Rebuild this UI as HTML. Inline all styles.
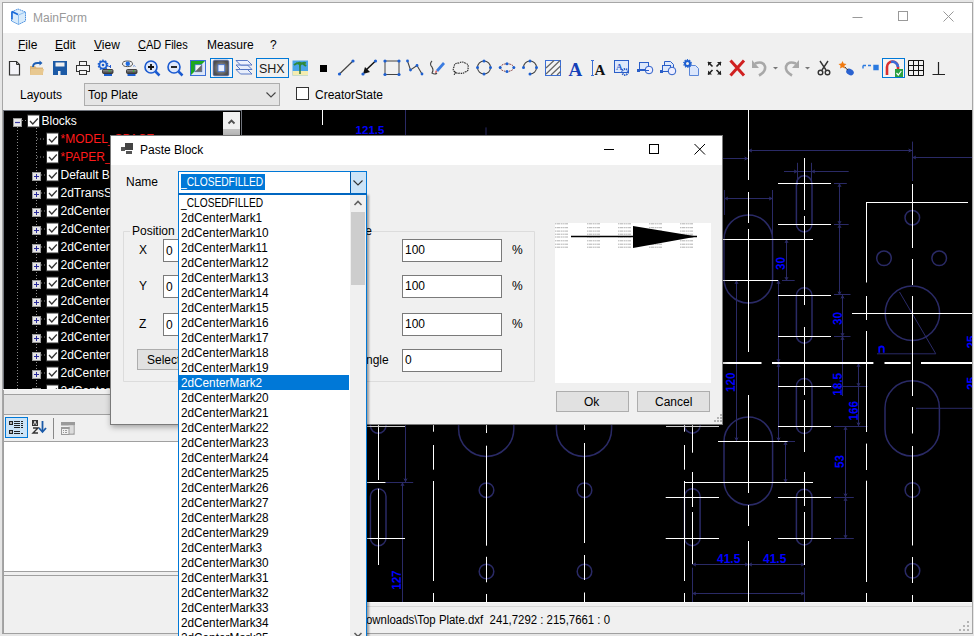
<!DOCTYPE html>
<html><head><meta charset="utf-8">
<style>
*{margin:0;padding:0;box-sizing:border-box}
html,body{width:974px;height:636px;overflow:hidden;background:#e6e6e6;font-family:"Liberation Sans",sans-serif;font-size:12px;color:#000}
.a{position:absolute}
.t{position:absolute;white-space:nowrap;line-height:1}
#win{left:2px;top:2px;width:971px;height:632px;border:1px solid #a6a6a6;background:#f0f0f0}
</style></head><body>
<div id="win" class="a"></div>
<!-- title bar -->
<div class="a" style="left:3px;top:3px;width:969px;height:30px;background:#fff"></div>
<svg class="a" style="left:0;top:0" width="974" height="34">
<path d="M11.5 12l6.5-3l7.5 3v9l-7 3.5l-7-3.5z" fill="#d8ebfb" stroke="#4a90e0" stroke-width="1" stroke-dasharray="1.6 0.6"/>
<path d="M11.5 12l7 3l7-3M18.5 15v9.5" fill="none" stroke="#7ab4ee" stroke-width="0.8"/>
<path d="M12 11.5v8" stroke="#1a6ad8" stroke-width="1.6"/>
<path d="M12 11.5l6 3" stroke="#1a6ad8" stroke-width="1.4"/>
<path d="M852.5 17.5h10" stroke="#999" stroke-width="1"/>
<rect x="898.5" y="11.5" width="9" height="9" fill="none" stroke="#999" stroke-width="1"/>
<path d="M943.5 11.5l10 10M953.5 11.5l-10 10" stroke="#999" stroke-width="1"/>
</svg>
<div class="t" style="left:33px;top:12px;color:#999">MainForm</div>
<!-- menu -->
<div class="t" style="left:18px;top:39px"><u>F</u>ile</div>
<div class="t" style="left:55px;top:39px"><u>E</u>dit</div>
<div class="t" style="left:94px;top:39px"><u>V</u>iew</div>
<div class="t" style="left:138px;top:39px;transform-origin:0 0;transform:scaleX(0.92)"><u>C</u>AD Files</div>
<div class="t" style="left:207px;top:39px">Measure</div>
<div class="t" style="left:270px;top:39px">?</div>
<!-- layouts bar -->
<div class="t" style="left:20px;top:89px">Layouts</div>
<div class="a" style="left:84px;top:83px;width:196px;height:23px;background:#e5e5e5;border:1px solid #adadad"></div>
<div class="t" style="left:88px;top:89px">Top Plate</div>
<svg class="a" style="left:262px;top:88px" width="16" height="12"><path d="M4.5 4.5l4.5 4.5l4.5-4.5" fill="none" stroke="#444" stroke-width="1.1"/></svg>
<div class="a" style="left:296px;top:87px;width:13px;height:13px;background:#fff;border:1px solid #333"></div>
<div class="t" style="left:315px;top:89px">CreatorState</div>
<!-- left panel -->
<div class="a" style="left:3px;top:110px;width:238px;height:279px;background:#000"></div>
<div class="a" style="left:3px;top:394px;width:238px;height:1px;background:#a0a0a0"></div>
<div class="a" style="left:3px;top:395px;width:238px;height:19px;background:#e1e1e1"></div>
<div class="a" style="left:3px;top:441px;width:238px;height:1px;background:#a0a0a0"></div>
<div class="a" style="left:3px;top:442px;width:238px;height:129px;background:#fff"></div>
<div class="a" style="left:3px;top:571px;width:238px;height:1px;background:#a0a0a0"></div>
<div class="a" style="left:3px;top:575px;width:238px;height:1px;background:#a0a0a0"></div>
<!-- cad view -->
<div class="a" style="left:242px;top:110px;width:730px;height:492px;background:#000"></div>
<!-- status -->
<div class="a" style="left:242px;top:606px;width:730px;height:1px;background:#d8d8d8"></div>
<div class="t" style="left:366px;top:614px;transform-origin:0 0;transform:scaleX(0.95)">ownloads\Top Plate.dxf&nbsp; 241,7292 : 215,7661 : 0</div>
<svg class="a" style="left:955px;top:617px" width="17" height="16" viewBox="955 617 17 16">
<rect x="967" y="621" width="2" height="2" fill="#b4b4b4"/><rect x="963" y="625" width="2" height="2" fill="#b4b4b4"/><rect x="967" y="625" width="2" height="2" fill="#b4b4b4"/><rect x="959" y="629" width="2" height="2" fill="#b4b4b4"/><rect x="963" y="629" width="2" height="2" fill="#b4b4b4"/><rect x="967" y="629" width="2" height="2" fill="#b4b4b4"/>
</svg>
<div class="a" style="left:3px;top:389px;width:1px;height:245px;background:#a0a0a0"></div>
<div class="a" style="left:2px;top:633px;width:971px;height:1px;background:#a0a0a0"></div>
<div class="a" style="left:242px;top:602px;width:730px;height:1px;background:#fafafa"></div>
<svg class="a" style="left:0;top:55px" width="974" height="25" viewBox="0 55 974 25">
<!-- 1 new doc -->
<path d="M9.5 61.5h7l3 3v10.5h-10z" fill="#f4f4f8" stroke="#333" stroke-width="1.2"/>
<path d="M16.5 61.5v3h3" fill="none" stroke="#333" stroke-width="1"/>
<!-- 2 open folder -->
<path d="M30 66h5l1.5 1.5H43v7.5H30z" fill="#dcb67a"/>
<path d="M31 69h13l-1.5 6H30z" fill="#e8c890"/>
<path d="M33 67q0-4 4.5-4h3" fill="none" stroke="#1e5fb4" stroke-width="1.8"/>
<path d="M39.5 60.5l3 2.5l-3 2.5z" fill="#1e5fb4"/>
<!-- 3 save -->
<path d="M53 61h14v14H53z" fill="#1c5aa6"/>
<rect x="55.5" y="62.5" width="9" height="4" fill="#f0f0f0"/>
<rect x="58" y="71" width="2.5" height="4" fill="#f0f0f0"/>
<!-- 4 printer -->
<rect x="79.5" y="61.5" width="7" height="4" fill="#f4f4f4" stroke="#333"/>
<rect x="76.5" y="65.5" width="13" height="6" fill="#f4f4f4" stroke="#333"/>
<rect x="79.5" y="70.5" width="7" height="4" fill="#f4f4f4" stroke="#333"/>
<!-- 5 gear printer -->
<circle cx="103" cy="65" r="3.6" fill="none" stroke="#1d5fd0" stroke-width="1.8"/>
<circle cx="103" cy="65" r="4.6" fill="none" stroke="#1d5fd0" stroke-width="1.6" stroke-dasharray="1.5 1.4"/>
<circle cx="103" cy="65" r="1.3" fill="#1d5fd0"/>
<path d="M108.5 66.5h2.5M110.5 65v3" stroke="#2a5ed0" stroke-width="1"/>
<defs><linearGradient id="pg" x1="0" y1="0" x2="0" y2="1"><stop offset="0" stop-color="#9a9a9a"/><stop offset="1" stop-color="#3a3a3a"/></linearGradient></defs>
<rect x="102.5" y="69.5" width="10.5" height="4" rx="1" fill="url(#pg)" stroke="#222" stroke-width="0.8"/>
<rect x="108.5" y="70.3" width="2" height="1.2" fill="#30c030"/>
<rect x="104" y="74" width="8" height="2" fill="#1d5fd0"/>
<!-- 6 eye printer -->
<ellipse cx="127.5" cy="63.8" rx="5" ry="2.8" fill="#f2f2f2" stroke="#444" stroke-width="0.9"/>
<circle cx="127.8" cy="63.8" r="2.2" fill="#1d6ae0"/>
<path d="M133 66.5q1-2 2.5 0" stroke="#5a8ae0" fill="none" stroke-width="0.9"/>
<rect x="126.5" y="69.5" width="10.5" height="4" rx="1" fill="url(#pg)" stroke="#222" stroke-width="0.8"/>
<rect x="133" y="70.3" width="1.2" height="1.5" fill="#30c030"/>
<rect x="127.5" y="74" width="8" height="2" fill="#1d5fd0"/>
<!-- 7 zoom in -->
<circle cx="151" cy="67" r="6" fill="#dfe8fb" stroke="#1a5ad0" stroke-width="1.6"/>
<path d="M155.5 71.5l4 4" stroke="#1a5ad0" stroke-width="2.5"/>
<path d="M148 67h6M151 64v6" stroke="#111" stroke-width="1.8"/>
<!-- 8 zoom out -->
<circle cx="174" cy="67" r="6" fill="#dfe8fb" stroke="#1a5ad0" stroke-width="1.6"/>
<path d="M178.5 71.5l4 4" stroke="#1a5ad0" stroke-width="2.5"/>
<path d="M171 67h6" stroke="#111" stroke-width="1.8"/>
<!-- 9 green square -->
<rect x="190.5" y="60.5" width="15" height="15" fill="#dfe7f8" stroke="#3b6fd6"/>
<path d="M191 61h14L191 75z" fill="#1ea81e"/>
<rect x="195" y="64.7" width="6.8" height="7" fill="#f4f4f4" stroke="#3b6fd6" stroke-width="0.8"/>
<path d="M201.8 64.7v7h-6.8z" fill="#6a6a6a"/>
<!-- 10 selected -->
<rect x="210.5" y="58.5" width="22" height="19" fill="#f4f4f4" stroke="#0078d7"/>
<defs><radialGradient id="rg1"><stop offset="0" stop-color="#a8a8a8"/><stop offset="1" stop-color="#4e4e4e"/></radialGradient></defs>
<rect x="213.2" y="60.2" width="15.6" height="15.6" rx="1.5" fill="url(#rg1)" stroke="#3a5ab0" stroke-width="0.6"/>
<rect x="218" y="64.7" width="6.7" height="7" fill="#e8efff" stroke="#3b6fd6" stroke-width="0.8"/>
<!-- 11 layers -->
<path d="M236 69.5h11.5l4.5 4.5h-11.5z" fill="#e8eefb" stroke="#4a6cc0" stroke-width="0.9"/>
<path d="M236 65h11.5l4.5 4.5h-11.5z" fill="#e8eefb" stroke="#4a6cc0" stroke-width="0.9"/>
<path d="M236 60.5h11.5l4.5 4.5h-11.5z" fill="#eef2fd" stroke="#4a6cc0" stroke-width="0.9"/>
<!-- 12 SHX -->
<rect x="256.5" y="58.5" width="32" height="19" fill="#f0f0f0" stroke="#0078d7"/>
<text x="259" y="73" font-family="Liberation Sans" font-size="12.5" fill="#1a1a1a">SHX</text>
<!-- 13 palm -->
<rect x="292.5" y="60.5" width="15.5" height="15" fill="#48a4e8"/>
<rect x="292.5" y="71" width="15.5" height="4.5" fill="#f4ecb0"/>
<path d="M300 64v10" stroke="#2f7a3a" stroke-width="1.5"/>
<path d="M294 65q6-5 12 1M296 63q4 1 4 2q2-3 6-2" fill="none" stroke="#2f8a3a" stroke-width="1.8"/>
<!-- 14 black square -->
<rect x="320" y="65" width="7" height="7" fill="#000"/>
<!-- 15 line -->
<path d="M339.5 74l13.5-13" stroke="#444" stroke-width="1.2"/>
<circle cx="339.5" cy="74" r="1.6" fill="#1d5fd0"/><circle cx="353" cy="61" r="1.6" fill="#1d5fd0"/>
<!-- 16 arrow -->
<path d="M375.5 61L365 71" stroke="#111" stroke-width="1.5"/>
<path d="M363 74l2-7l5 5z" fill="#111"/>
<circle cx="375.5" cy="61" r="1.6" fill="#1d5fd0"/><circle cx="363" cy="74" r="1.6" fill="#1d5fd0"/>
<!-- 17 rect -->
<rect x="385" y="61" width="14" height="13.5" fill="none" stroke="#444"/>
<circle cx="385" cy="61" r="1.6" fill="#1d5fd0"/><circle cx="399" cy="61" r="1.6" fill="#1d5fd0"/>
<circle cx="385" cy="74.5" r="1.6" fill="#1d5fd0"/><circle cx="399" cy="74.5" r="1.6" fill="#1d5fd0"/>
<!-- 18 polyline -->
<path d="M407.5 61l3 9l6.5-4.5l5 8.5" fill="none" stroke="#444" stroke-width="1.1"/>
<circle cx="407.5" cy="61" r="1.4" fill="#1d5fd0"/><circle cx="410.5" cy="70" r="1.4" fill="#1d5fd0"/><circle cx="417" cy="65.5" r="1.4" fill="#1d5fd0"/><circle cx="422" cy="74" r="1.4" fill="#1d5fd0"/>
<!-- 19 pen -->
<path d="M432 61q-3 3 0 6q2 3 0 6q3 2 5 0" fill="none" stroke="#444" stroke-width="1.1"/>
<path d="M438 72l7-8l-2-2l-7 8z" fill="#3a7be0"/>
<path d="M436 70l-1 3l2-1z" fill="#d33"/>
<!-- 20 cloud -->
<path d="M455 72q-3-2-1-5q0-4 5-4q3-2 6 0q4 1 3 5q1 3-3 4q-2 2-5 1q-3 1-5-1z" fill="none" stroke="#222" stroke-width="1.1" stroke-dasharray="1.5 0.8"/>
<path d="M456 72l-2 3" stroke="#222"/>
<!-- 21 circle -->
<circle cx="484" cy="67.5" r="6.5" fill="none" stroke="#444" stroke-width="1.1"/>
<circle cx="484" cy="61" r="1.5" fill="#1d5fd0"/><circle cx="484" cy="74" r="1.5" fill="#1d5fd0"/><circle cx="477.5" cy="67.5" r="1.5" fill="#1d5fd0"/><circle cx="490.5" cy="67.5" r="1.5" fill="#1d5fd0"/>
<!-- 22 ellipse -->
<ellipse cx="507" cy="67.6" rx="6.8" ry="3.8" fill="none" stroke="#7a2a2a" stroke-width="1" stroke-dasharray="1.5 1"/>
<circle cx="507" cy="63.8" r="1.5" fill="#1d5fd0"/><circle cx="507" cy="71.4" r="1.5" fill="#1d5fd0"/><circle cx="500.2" cy="67.6" r="1.5" fill="#1d5fd0"/><circle cx="513.8" cy="67.6" r="1.5" fill="#1d5fd0"/>
<!-- 23 arc -->
<path d="M523.5 67.5A6.5 6.5 0 1 1 530 74" fill="none" stroke="#444" stroke-width="1.1"/>
<circle cx="523.5" cy="67.5" r="1.5" fill="#1d5fd0"/><circle cx="530" cy="61" r="1.5" fill="#1d5fd0"/><circle cx="536.5" cy="67.5" r="1.5" fill="#1d5fd0"/><circle cx="530" cy="74" r="1.5" fill="#1d5fd0"/>
<!-- 24 hatch -->
<rect x="545.5" y="60.5" width="15" height="15" fill="#f4f4f4" stroke="#3b6fd6"/>
<path d="M546 68l8-7.5M546 74l14-13.5M551 75l9.5-9M557 75l3.5-3.5" stroke="#666" stroke-width="1.2"/>
<!-- 25 A -->
<text x="568.5" y="75.5" font-family="Liberation Serif" font-weight="bold" font-size="19" fill="#1640b8">A</text>
<!-- 26 [A -->
<path d="M591 60.5h3M592.5 60.5v15M591 75.5h3" stroke="#3b6fd6" stroke-width="1"/>
<text x="594.5" y="74.5" font-family="Liberation Serif" font-weight="bold" font-size="15" fill="#111">A</text>
<!-- 27 A gear -->
<rect x="614.5" y="60.5" width="14" height="12" fill="#dde8fb" stroke="#2a5ec8"/>
<text x="616" y="70" font-family="Liberation Serif" font-weight="bold" font-size="9" fill="#2a5ec8">A</text>
<circle cx="625" cy="72" r="3" fill="none" stroke="#2a5ec8" stroke-width="2" stroke-dasharray="1.3 0.8"/>
<!-- 28 block insert -->
<rect x="639.5" y="62.5" width="9" height="7" fill="#dde8fb" stroke="#2a5ec8"/>
<circle cx="649" cy="70" r="3.8" fill="#eef" stroke="#2a5ec8"/>
<rect x="637" y="69" width="3" height="3" fill="#2a5ec8"/>
<path d="M640 70.5h9" stroke="#2a5ec8"/>
<!-- 29 block 2 -->
<path d="M664.5 61.5h6l3 3v6h-9z" fill="#dde8fb" stroke="#2a5ec8"/>
<rect x="662.5" y="65.5" width="8" height="6" fill="#dde8fb" stroke="#2a5ec8"/>
<circle cx="672" cy="71" r="3.8" fill="#eef" stroke="#2a5ec8"/>
<rect x="660" y="70" width="3" height="3" fill="#2a5ec8"/>
<!-- 30 gear doc -->
<path d="M689.5 65.5h6l3 3v7h-9z" fill="#dbe6fb" stroke="#5a86d8"/>
<circle cx="687.5" cy="63.5" r="2.5" fill="none" stroke="#1d5fd0" stroke-width="2"/>
<circle cx="687.5" cy="63.5" r="3.8" fill="none" stroke="#1d5fd0" stroke-width="1.2" stroke-dasharray="1.2 1.2"/>
<!-- 31 expand -->
<path d="M708 62l4.5 4.5M721 62l-4.5 4.5M708 74.5l4.5-4.5M721 74.5l-4.5-4.5" stroke="#222" stroke-width="1.6"/>
<path d="M708 62h4l-4 4zM721 62h-4l4 4zM708 74.5h4l-4-4zM721 74.5h-4l4-4z" fill="#222"/>
<!-- 32 red X -->
<path d="M730.5 60.5l13.5 15M744 60.5l-13.5 15" stroke="#d02020" stroke-width="3"/>
<!-- 33 undo -->
<path d="M755 63.5q8-3 10 3q1 5-6 9" fill="none" stroke="#a8a8a8" stroke-width="2.6"/>
<path d="M752 60v8h7z" fill="#a8a8a8"/>
<path d="M773 67h5l-2.5 2.5z" fill="#777"/>
<!-- 34 redo -->
<path d="M796 63.5q-8-3-10 3q-1 5 6 9" fill="none" stroke="#a8a8a8" stroke-width="2.6"/>
<path d="M799 60v8h-7z" fill="#a8a8a8"/>
<path d="M805 67h5l-2.5 2.5z" fill="#777"/>
<!-- 35 scissors -->
<path d="M820 61l6 9M828 61l-6 9" stroke="#333" stroke-width="1.4"/>
<circle cx="820.5" cy="72.5" r="2.3" fill="none" stroke="#333" stroke-width="1.4"/>
<circle cx="827.5" cy="72.5" r="2.3" fill="none" stroke="#333" stroke-width="1.4"/>
<!-- 36 star mouse -->
<path d="M842.5 61l1.2 2.6l2.8.3l-2.1 1.9l.6 2.8l-2.5-1.4l-2.5 1.4l.6-2.8l-2.1-1.9l2.8-.3z" fill="#f07a10"/>
<ellipse cx="850" cy="72" rx="4" ry="3" fill="#2a62d0" transform="rotate(30 850 72)"/>
<path d="M845 67q1 2 3 3" stroke="#333" fill="none"/>
<!-- 37 dimension -->
<path d="M863 65.5h3M863 65.5v3M868 65.5h3M874 65.5h4v4h-4z" stroke="#2a7ae0" stroke-width="1.4" fill="#2a7ae0"/>
<!-- 38 magnet -->
<rect x="882.5" y="58.5" width="22" height="19" fill="#f4f4f4" stroke="#0078d7"/>
<path d="M887 75v-8a5.5 5.5 0 0 1 11 0v3" fill="none" stroke="#d93030" stroke-width="2.6"/>
<path d="M891 62a5.5 5.5 0 0 1 7 5" fill="none" stroke="#3a6ad8" stroke-width="2.6"/>
<rect x="895" y="69" width="8" height="8" fill="#2aa040"/>
<path d="M896.5 73l1.8 2l3-4" stroke="#fff" stroke-width="1.2" fill="none"/>
<!-- 39 grid -->
<path d="M908.5 60.5h15v15h-15zM913.5 60v16M918.5 60v16M908 65.5h16M908 70.5h16" fill="none" stroke="#111" stroke-width="1"/>
<!-- 40 perp -->
<path d="M938.5 62v12.5M932.5 74.5h12.5" stroke="#222" stroke-width="1.2"/>
</svg>
<!-- tree -->
<svg class="a" style="left:3px;top:110px" width="238" height="279" viewBox="3 110 238 279">
<path d="M17.5 127v262M36.5 128v261" stroke="#8a8a8a" stroke-width="1" stroke-dasharray="1 2"/>
<path d="M22 120.5h5" stroke="#8a8a8a" stroke-width="1" stroke-dasharray="1 2"/>
<rect x="13.5" y="118.5" width="8" height="8" fill="#e8e8e8" stroke="#9a9a9a"/><path d="M15 122.5h5" stroke="#3a3aa0" stroke-width="1.2"/>
<rect x="27.5" y="115.0" width="12" height="12" fill="#fff" stroke="#333"/><path d="M30 121.0l2.8 3l5-5.5" fill="none" stroke="#333" stroke-width="1.3"/>
<text x="41.5" y="124.7" font-family="Liberation Sans" font-size="12" fill="#fff">Blocks</text>
<path d="M37 139.0h9" stroke="#8a8a8a" stroke-width="1" stroke-dasharray="1 2"/>
<rect x="46.5" y="133.0" width="12" height="12" fill="#fff" stroke="#333"/><path d="M49 139.0l2.8 3l5-5.5" fill="none" stroke="#333" stroke-width="1.3"/>
<text x="60.5" y="142.7" font-family="Liberation Sans" font-size="12" fill="#ff1a1a">*MODEL_SPACE</text>
<path d="M37 157.0h9" stroke="#8a8a8a" stroke-width="1" stroke-dasharray="1 2"/>
<rect x="46.5" y="151.0" width="12" height="12" fill="#fff" stroke="#333"/><path d="M49 157.0l2.8 3l5-5.5" fill="none" stroke="#333" stroke-width="1.3"/>
<text x="60.5" y="160.7" font-family="Liberation Sans" font-size="12" fill="#ff1a1a">*PAPER_SPACE</text>
<rect x="32.5" y="172.5" width="8" height="8" fill="#e4e4e4" stroke="#9a9a9a"/><path d="M34 176.5h5M36.5 174.0v5" stroke="#2a2a9a" stroke-width="1"/><path d="M41 175.0h5" stroke="#8a8a8a" stroke-width="1" stroke-dasharray="1 2"/>
<rect x="46.5" y="169.0" width="12" height="12" fill="#fff" stroke="#333"/><path d="M49 175.0l2.8 3l5-5.5" fill="none" stroke="#333" stroke-width="1.3"/>
<text x="60.5" y="178.7" font-family="Liberation Sans" font-size="12" fill="#fff">Default Blocks</text>
<rect x="32.5" y="190.5" width="8" height="8" fill="#e4e4e4" stroke="#9a9a9a"/><path d="M34 194.5h5M36.5 192.0v5" stroke="#2a2a9a" stroke-width="1"/><path d="M41 193.0h5" stroke="#8a8a8a" stroke-width="1" stroke-dasharray="1 2"/>
<rect x="46.5" y="187.0" width="12" height="12" fill="#fff" stroke="#333"/><path d="M49 193.0l2.8 3l5-5.5" fill="none" stroke="#333" stroke-width="1.3"/>
<text x="60.5" y="196.7" font-family="Liberation Sans" font-size="12" fill="#fff">2dTransSymbol</text>
<rect x="32.5" y="208.5" width="8" height="8" fill="#e4e4e4" stroke="#9a9a9a"/><path d="M34 212.5h5M36.5 210.0v5" stroke="#2a2a9a" stroke-width="1"/><path d="M41 211.0h5" stroke="#8a8a8a" stroke-width="1" stroke-dasharray="1 2"/>
<rect x="46.5" y="205.0" width="12" height="12" fill="#fff" stroke="#333"/><path d="M49 211.0l2.8 3l5-5.5" fill="none" stroke="#333" stroke-width="1.3"/>
<text x="60.5" y="214.7" font-family="Liberation Sans" font-size="12" fill="#fff">2dCenterMark1</text>
<rect x="32.5" y="226.5" width="8" height="8" fill="#e4e4e4" stroke="#9a9a9a"/><path d="M34 230.5h5M36.5 228.0v5" stroke="#2a2a9a" stroke-width="1"/><path d="M41 229.0h5" stroke="#8a8a8a" stroke-width="1" stroke-dasharray="1 2"/>
<rect x="46.5" y="223.0" width="12" height="12" fill="#fff" stroke="#333"/><path d="M49 229.0l2.8 3l5-5.5" fill="none" stroke="#333" stroke-width="1.3"/>
<text x="60.5" y="232.7" font-family="Liberation Sans" font-size="12" fill="#fff">2dCenterMark2</text>
<rect x="32.5" y="244.5" width="8" height="8" fill="#e4e4e4" stroke="#9a9a9a"/><path d="M34 248.5h5M36.5 246.0v5" stroke="#2a2a9a" stroke-width="1"/><path d="M41 247.0h5" stroke="#8a8a8a" stroke-width="1" stroke-dasharray="1 2"/>
<rect x="46.5" y="241.0" width="12" height="12" fill="#fff" stroke="#333"/><path d="M49 247.0l2.8 3l5-5.5" fill="none" stroke="#333" stroke-width="1.3"/>
<text x="60.5" y="250.7" font-family="Liberation Sans" font-size="12" fill="#fff">2dCenterMark3</text>
<rect x="32.5" y="262.5" width="8" height="8" fill="#e4e4e4" stroke="#9a9a9a"/><path d="M34 266.5h5M36.5 264.0v5" stroke="#2a2a9a" stroke-width="1"/><path d="M41 265.0h5" stroke="#8a8a8a" stroke-width="1" stroke-dasharray="1 2"/>
<rect x="46.5" y="259.0" width="12" height="12" fill="#fff" stroke="#333"/><path d="M49 265.0l2.8 3l5-5.5" fill="none" stroke="#333" stroke-width="1.3"/>
<text x="60.5" y="268.7" font-family="Liberation Sans" font-size="12" fill="#fff">2dCenterMark4</text>
<rect x="32.5" y="280.5" width="8" height="8" fill="#e4e4e4" stroke="#9a9a9a"/><path d="M34 284.5h5M36.5 282.0v5" stroke="#2a2a9a" stroke-width="1"/><path d="M41 283.0h5" stroke="#8a8a8a" stroke-width="1" stroke-dasharray="1 2"/>
<rect x="46.5" y="277.0" width="12" height="12" fill="#fff" stroke="#333"/><path d="M49 283.0l2.8 3l5-5.5" fill="none" stroke="#333" stroke-width="1.3"/>
<text x="60.5" y="286.7" font-family="Liberation Sans" font-size="12" fill="#fff">2dCenterMark5</text>
<rect x="32.5" y="298.5" width="8" height="8" fill="#e4e4e4" stroke="#9a9a9a"/><path d="M34 302.5h5M36.5 300.0v5" stroke="#2a2a9a" stroke-width="1"/><path d="M41 301.0h5" stroke="#8a8a8a" stroke-width="1" stroke-dasharray="1 2"/>
<rect x="46.5" y="295.0" width="12" height="12" fill="#fff" stroke="#333"/><path d="M49 301.0l2.8 3l5-5.5" fill="none" stroke="#333" stroke-width="1.3"/>
<text x="60.5" y="304.7" font-family="Liberation Sans" font-size="12" fill="#fff">2dCenterMark6</text>
<rect x="32.5" y="316.5" width="8" height="8" fill="#e4e4e4" stroke="#9a9a9a"/><path d="M34 320.5h5M36.5 318.0v5" stroke="#2a2a9a" stroke-width="1"/><path d="M41 319.0h5" stroke="#8a8a8a" stroke-width="1" stroke-dasharray="1 2"/>
<rect x="46.5" y="313.0" width="12" height="12" fill="#fff" stroke="#333"/><path d="M49 319.0l2.8 3l5-5.5" fill="none" stroke="#333" stroke-width="1.3"/>
<text x="60.5" y="322.7" font-family="Liberation Sans" font-size="12" fill="#fff">2dCenterMark7</text>
<rect x="32.5" y="334.5" width="8" height="8" fill="#e4e4e4" stroke="#9a9a9a"/><path d="M34 338.5h5M36.5 336.0v5" stroke="#2a2a9a" stroke-width="1"/><path d="M41 337.0h5" stroke="#8a8a8a" stroke-width="1" stroke-dasharray="1 2"/>
<rect x="46.5" y="331.0" width="12" height="12" fill="#fff" stroke="#333"/><path d="M49 337.0l2.8 3l5-5.5" fill="none" stroke="#333" stroke-width="1.3"/>
<text x="60.5" y="340.7" font-family="Liberation Sans" font-size="12" fill="#fff">2dCenterMark8</text>
<rect x="32.5" y="352.5" width="8" height="8" fill="#e4e4e4" stroke="#9a9a9a"/><path d="M34 356.5h5M36.5 354.0v5" stroke="#2a2a9a" stroke-width="1"/><path d="M41 355.0h5" stroke="#8a8a8a" stroke-width="1" stroke-dasharray="1 2"/>
<rect x="46.5" y="349.0" width="12" height="12" fill="#fff" stroke="#333"/><path d="M49 355.0l2.8 3l5-5.5" fill="none" stroke="#333" stroke-width="1.3"/>
<text x="60.5" y="358.7" font-family="Liberation Sans" font-size="12" fill="#fff">2dCenterMark9</text>
<rect x="32.5" y="370.5" width="8" height="8" fill="#e4e4e4" stroke="#9a9a9a"/><path d="M34 374.5h5M36.5 372.0v5" stroke="#2a2a9a" stroke-width="1"/><path d="M41 373.0h5" stroke="#8a8a8a" stroke-width="1" stroke-dasharray="1 2"/>
<rect x="46.5" y="367.0" width="12" height="12" fill="#fff" stroke="#333"/><path d="M49 373.0l2.8 3l5-5.5" fill="none" stroke="#333" stroke-width="1.3"/>
<text x="60.5" y="376.7" font-family="Liberation Sans" font-size="12" fill="#fff">2dCenterMark10</text>
<rect x="32.5" y="388.5" width="8" height="8" fill="#e4e4e4" stroke="#9a9a9a"/><path d="M34 392.5h5M36.5 390.0v5" stroke="#2a2a9a" stroke-width="1"/><path d="M41 391.0h5" stroke="#8a8a8a" stroke-width="1" stroke-dasharray="1 2"/>
<rect x="46.5" y="385.0" width="12" height="12" fill="#fff" stroke="#333"/><path d="M49 391.0l2.8 3l5-5.5" fill="none" stroke="#333" stroke-width="1.3"/>
<text x="60.5" y="394.7" font-family="Liberation Sans" font-size="12" fill="#fff">2dCenterMark11</text>
<rect x="223" y="112" width="17" height="17" fill="#f0f0f0"/><rect x="223" y="129" width="17" height="260" fill="#c1c1c1"/><path d="M228.5 123.5l3-3l3 3" fill="none" stroke="#505050" stroke-width="1.8"/>
<path d="M241.5 110v279" stroke="#6e6e78" stroke-width="1"/>
</svg>
<svg class="a" style="left:0;top:414px" width="240" height="28" viewBox="0 414 240 28">
<rect x="5.5" y="417.5" width="22" height="20" fill="#cce4f7" stroke="#0078d7"/>
<rect x="9" y="421" width="4" height="4" fill="#222"/><path d="M10 423h2M11 422v2" stroke="#fff" stroke-width="0.8"/>
<path d="M14 421.5h6M14 423.5h6M14 425.5h6M14 427.5h6M21 421.5h2M21 423.5h2M21 425.5h2M21 427.5h2" stroke="#222" stroke-width="1"/>
<rect x="9" y="430" width="4" height="4" fill="#222"/><path d="M10 432h2M11 431v2" stroke="#fff" stroke-width="0.8"/>
<path d="M14 431.5h6M14 433.5h6M21 433.5h2" stroke="#222" stroke-width="1"/>
<rect x="32" y="420" width="6" height="6" fill="#333"/><path d="M33.5 425l1.5-4l1.5 4" fill="none" stroke="#fff" stroke-width="0.8"/>
<path d="M33 428h5l-5 5h5" fill="none" stroke="#333" stroke-width="1.4"/>
<path d="M42.5 421v10" stroke="#1a5aa8" stroke-width="1.8"/><path d="M39 428l3.5 4l3.5-4" fill="none" stroke="#1a5aa8" stroke-width="1.8"/>
<path d="M53.5 418v21" stroke="#888" stroke-width="1"/>
<rect x="61" y="422" width="14" height="3.5" fill="#9a9a9a"/><path d="M74 425.5v8.5h-5.5" fill="none" stroke="#9a9a9a" stroke-width="1.3"/><rect x="68.5" y="425.5" width="5" height="8" fill="#dcdcdc"/>
<rect x="61.5" y="427.5" width="7.5" height="7" fill="#f0f0f0" stroke="#9a9a9a"/><rect x="61" y="427" width="8.5" height="2" fill="#9a9a9a"/>
<path d="M63 430.5h1M65 430.5h2M63 432.5h1M65 432.5h2" stroke="#9a9a9a" stroke-width="1"/>
</svg>
<div class="a" style="left:3px;top:389px;width:238px;height:1px;background:#f8f8f8"></div>
<div class="a" style="left:3px;top:414px;width:238px;height:1px;background:#a0a0a0"></div>
<div class="a" style="left:241px;top:110px;width:1px;height:279px;background:#70747c"></div>
<div class="a" style="left:3px;top:110px;width:239px;height:1px;background:#70747c"></div>
<div class="a" style="left:3px;top:110px;width:1px;height:279px;background:#70747c"></div>
<svg class="a" style="left:242px;top:110px" width="730" height="492" viewBox="242 110 730 492">
<path d="M724.0 239.3A24.3 24.3 0 0 1 772.5999999999999 239.3V278.7A24.3 24.3 0 0 1 724.0 278.7Z" stroke="#2a2a66" stroke-width="1.5" fill="none"/>
<path d="M724.0 441.3A24.3 24.3 0 0 1 772.5999999999999 441.3V480.7A24.3 24.3 0 0 1 724.0 480.7Z" stroke="#2a2a66" stroke-width="1.5" fill="none"/>
<path d="M796.4000000000001 183.60000000000002A7.8 7.8 0 0 1 812.0 183.60000000000002V224.1A7.8 7.8 0 0 1 796.4000000000001 224.1Z" stroke="#2a2a66" stroke-width="1.5" fill="none"/>
<path d="M796.4000000000001 295.5A7.8 7.8 0 0 1 812.0 295.5V335.4A7.8 7.8 0 0 1 796.4000000000001 335.4Z" stroke="#2a2a66" stroke-width="1.5" fill="none"/>
<path d="M796.4000000000001 386.3A7.8 7.8 0 0 1 812.0 386.3V425.7A7.8 7.8 0 0 1 796.4000000000001 425.7Z" stroke="#2a2a66" stroke-width="1.5" fill="none"/>
<path d="M796.4000000000001 497.0A7.8 7.8 0 0 1 812.0 497.0V537.2A7.8 7.8 0 0 1 796.4000000000001 537.2Z" stroke="#2a2a66" stroke-width="1.5" fill="none"/>
<path d="M370.4 385.3A7.8 7.8 0 0 1 386.0 385.3V425.4A7.8 7.8 0 0 1 370.4 425.4Z" stroke="#2a2a66" stroke-width="1.5" fill="none"/>
<path d="M370.4 496.5A7.8 7.8 0 0 1 386.0 496.5V537.9000000000001A7.8 7.8 0 0 1 370.4 537.9000000000001Z" stroke="#2a2a66" stroke-width="1.5" fill="none"/>
<path d="M684.5 385.3A7.8 7.8 0 0 1 700.0999999999999 385.3V425.4A7.8 7.8 0 0 1 684.5 425.4Z" stroke="#2a2a66" stroke-width="1.5" fill="none"/>
<path d="M684.5 496.5A7.8 7.8 0 0 1 700.0999999999999 496.5V537.9000000000001A7.8 7.8 0 0 1 684.5 537.9000000000001Z" stroke="#2a2a66" stroke-width="1.5" fill="none"/>
<path d="M458.59999999999997 373.6A27.6 27.6 0 0 1 513.8 373.6V428.9A27.6 27.6 0 0 1 458.59999999999997 428.9Z" stroke="#2a2a66" stroke-width="1.5" fill="none"/>
<path d="M556.4 373.6A27.6 27.6 0 0 1 611.6 373.6V428.9A27.6 27.6 0 0 1 556.4 428.9Z" stroke="#2a2a66" stroke-width="1.5" fill="none"/>
<path d="M885.0 407.9A27.2 27.2 0 0 1 939.4000000000001 407.9V428.90000000000003A27.2 27.2 0 0 1 885.0 428.90000000000003Z" stroke="#2a2a66" stroke-width="1.5" fill="none"/>
<circle cx="486.5" cy="490.2" r="7.3" stroke="#2a2a66" stroke-width="1.5" fill="none"/>
<circle cx="486.5" cy="571.5" r="7.3" stroke="#2a2a66" stroke-width="1.5" fill="none"/>
<circle cx="584.5" cy="490.2" r="7.3" stroke="#2a2a66" stroke-width="1.5" fill="none"/>
<circle cx="584.5" cy="571.5" r="7.3" stroke="#2a2a66" stroke-width="1.5" fill="none"/>
<circle cx="912.4" cy="490" r="7.3" stroke="#2a2a66" stroke-width="1.5" fill="none"/>
<circle cx="912.5" cy="570.8" r="7.3" stroke="#2a2a66" stroke-width="1.5" fill="none"/>
<circle cx="912.3" cy="217.7" r="7.3" stroke="#2a2a66" stroke-width="1.5" fill="none"/>
<circle cx="884" cy="258.3" r="7.3" stroke="#2a2a66" stroke-width="1.5" fill="none"/>
<circle cx="939.2" cy="258.3" r="7.3" stroke="#2a2a66" stroke-width="1.5" fill="none"/>
<circle cx="912.4" cy="313.2" r="27.2" stroke="#2a2a66" stroke-width="1.5" fill="none"/>
<path d="M899.5 292L935.8 353.8" stroke="#2a2a66" stroke-width="1"/>
<path d="M877 353.8H935.8" stroke="#2a2a66" stroke-width="1" fill="none"/>
<path d="M916 408.3H972" stroke="#2a2a66" stroke-width="1" fill="none"/>
<path d="M405.5 110V135" stroke="#2a2a66" stroke-width="1" fill="none"/>
<path d="M486 127.4V135" stroke="#2a2a66" stroke-width="1" fill="none"/>
<path d="M748 150.5H912.3" stroke="#2a2a66" stroke-width="1" fill="none"/>
<path d="M752 149.0L749 150.5L752 152.0" stroke="#2a2a66" stroke-width="1" fill="none"/>
<path d="M908.5 149.0L911.5 150.5L908.5 152.0" stroke="#2a2a66" stroke-width="1" fill="none"/>
<path d="M723 158.5H748" stroke="#2a2a66" stroke-width="1" fill="none"/>
<path d="M744.5 157.0L747.5 158.5L744.5 160.0" stroke="#2a2a66" stroke-width="1" fill="none"/>
<path d="M912.3 157.5H972" stroke="#2a2a66" stroke-width="1" fill="none"/>
<path d="M916 156.0L913 157.5L916 159.0" stroke="#2a2a66" stroke-width="1" fill="none"/>
<path d="M912.5 141.6V181" stroke="#2a2a66" stroke-width="1" fill="none"/>
<path d="M784 171.5H848.7" stroke="#2a2a66" stroke-width="1" fill="none"/>
<path d="M794 170.0L797 171.5L794 173.0" stroke="#2a2a66" stroke-width="1" fill="none"/>
<path d="M815 170.0L812 171.5L815 173.0" stroke="#2a2a66" stroke-width="1" fill="none"/>
<path d="M797.5 162.8V185" stroke="#2a2a66" stroke-width="1" fill="none"/>
<path d="M811.5 162.8V185" stroke="#2a2a66" stroke-width="1" fill="none"/>
<path d="M724.5 190V215" stroke="#2a2a66" stroke-width="1" fill="none"/>
<path d="M772.5 190V239" stroke="#2a2a66" stroke-width="1" fill="none"/>
<path d="M724 198.5H772.7" stroke="#2a2a66" stroke-width="1" fill="none"/>
<path d="M728 197.0L725 198.5L728 200.0" stroke="#2a2a66" stroke-width="1" fill="none"/>
<path d="M769 197.0L772 198.5L769 200.0" stroke="#2a2a66" stroke-width="1" fill="none"/>
<path d="M786.5 239.4V280" stroke="#2a2a66" stroke-width="1" fill="none"/>
<path d="M782 280.5H794.7" stroke="#2a2a66" stroke-width="1" fill="none"/>
<path d="M785.0 243L786.5 240L788.0 243" stroke="#2a2a66" stroke-width="1" fill="none"/>
<path d="M785.0 277L786.5 280L788.0 277" stroke="#2a2a66" stroke-width="1" fill="none"/>
<path d="M839.5 183V295" stroke="#2a2a66" stroke-width="1" fill="none"/>
<path d="M838.0 187L839.5 184L841.0 187" stroke="#2a2a66" stroke-width="1" fill="none"/>
<path d="M838.0 221L839.5 224L841.0 221" stroke="#2a2a66" stroke-width="1" fill="none"/>
<path d="M838.0 228L839.5 225L841.0 228" stroke="#2a2a66" stroke-width="1" fill="none"/>
<path d="M838.0 291.5L839.5 294.5L841.0 291.5" stroke="#2a2a66" stroke-width="1" fill="none"/>
<path d="M834 183.5H846.8" stroke="#2a2a66" stroke-width="1" fill="none"/>
<path d="M834 224.5H848.7" stroke="#2a2a66" stroke-width="1" fill="none"/>
<path d="M834 294.5H850.5" stroke="#2a2a66" stroke-width="1" fill="none"/>
<path d="M834 336.5H850.5" stroke="#2a2a66" stroke-width="1" fill="none"/>
<path d="M842.5 294.8V396" stroke="#2a2a66" stroke-width="1" fill="none"/>
<path d="M841.0 298.5L842.5 295.5L844.0 298.5" stroke="#2a2a66" stroke-width="1" fill="none"/>
<path d="M841.0 333L842.5 336L844.0 333" stroke="#2a2a66" stroke-width="1" fill="none"/>
<path d="M841.0 340L842.5 337L844.0 340" stroke="#2a2a66" stroke-width="1" fill="none"/>
<path d="M736.5 280V441" stroke="#2a2a66" stroke-width="1" fill="none"/>
<path d="M735.0 284L736.5 281L738.0 284" stroke="#2a2a66" stroke-width="1" fill="none"/>
<path d="M735.0 437.5L736.5 440.5L738.0 437.5" stroke="#2a2a66" stroke-width="1" fill="none"/>
<path d="M778.5 280V441" stroke="#2a2a66" stroke-width="1" fill="none"/>
<path d="M777.0 284L778.5 281L780.0 284" stroke="#2a2a66" stroke-width="1" fill="none"/>
<path d="M777.0 359L778.5 362L780.0 359" stroke="#2a2a66" stroke-width="1" fill="none"/>
<path d="M777.0 367L778.5 364L780.0 367" stroke="#2a2a66" stroke-width="1" fill="none"/>
<path d="M777.0 437.5L778.5 440.5L780.0 437.5" stroke="#2a2a66" stroke-width="1" fill="none"/>
<path d="M785.5 441V482" stroke="#2a2a66" stroke-width="1" fill="none"/>
<path d="M778 441.5H795" stroke="#2a2a66" stroke-width="1" fill="none"/>
<path d="M784.0 445L785.5 442L787.0 445" stroke="#2a2a66" stroke-width="1" fill="none"/>
<path d="M784.0 479L785.5 482L787.0 479" stroke="#2a2a66" stroke-width="1" fill="none"/>
<path d="M858.5 363V426" stroke="#2a2a66" stroke-width="1" fill="none"/>
<path d="M857.0 367L858.5 364L860.0 367" stroke="#2a2a66" stroke-width="1" fill="none"/>
<path d="M857.0 383L858.5 386L860.0 383" stroke="#2a2a66" stroke-width="1" fill="none"/>
<path d="M857.0 422.5L858.5 425.5L860.0 422.5" stroke="#2a2a66" stroke-width="1" fill="none"/>
<path d="M831 386.5H867.5" stroke="#2a2a66" stroke-width="1" fill="none"/>
<path d="M834 426.5H867.5" stroke="#2a2a66" stroke-width="1" fill="none"/>
<path d="M845.5 426V538.7" stroke="#2a2a66" stroke-width="1" fill="none"/>
<path d="M844.0 430L845.5 427L847.0 430" stroke="#2a2a66" stroke-width="1" fill="none"/>
<path d="M844.0 493.5L845.5 496.5L847.0 493.5" stroke="#2a2a66" stroke-width="1" fill="none"/>
<path d="M844.0 501L845.5 498L847.0 501" stroke="#2a2a66" stroke-width="1" fill="none"/>
<path d="M844.0 535L845.5 538L847.0 535" stroke="#2a2a66" stroke-width="1" fill="none"/>
<path d="M834 497.5H853.8" stroke="#2a2a66" stroke-width="1" fill="none"/>
<path d="M834 538.5H853.8" stroke="#2a2a66" stroke-width="1" fill="none"/>
<path d="M405.5 424V482" stroke="#2a2a66" stroke-width="1" fill="none"/>
<path d="M404.0 478.5L405.5 481.5L407.0 478.5" stroke="#2a2a66" stroke-width="1" fill="none"/>
<path d="M385.5 482.5H413.2" stroke="#2a2a66" stroke-width="1" fill="none"/>
<path d="M402.5 482V602" stroke="#2a2a66" stroke-width="1" fill="none"/>
<path d="M401.0 486L402.5 483L404.0 486" stroke="#2a2a66" stroke-width="1" fill="none"/>
<path d="M692.2 564.5H804.8" stroke="#2a2a66" stroke-width="1" fill="none"/>
<path d="M696 563.0L693 564.5L696 566.0" stroke="#2a2a66" stroke-width="1" fill="none"/>
<path d="M745 563.0L748 564.5L745 566.0" stroke="#2a2a66" stroke-width="1" fill="none"/>
<path d="M752 563.0L749 564.5L752 566.0" stroke="#2a2a66" stroke-width="1" fill="none"/>
<path d="M801 563.0L804 564.5L801 566.0" stroke="#2a2a66" stroke-width="1" fill="none"/>
<path d="M692.2 593.5H804.8" stroke="#2a2a66" stroke-width="1" fill="none"/>
<path d="M696 592.0L693 593.5L696 595.0" stroke="#2a2a66" stroke-width="1" fill="none"/>
<path d="M801 592.0L804 593.5L801 595.0" stroke="#2a2a66" stroke-width="1" fill="none"/>
<path d="M692.5 567.7V602" stroke="#2a2a66" stroke-width="1" fill="none"/>
<path d="M804.5 567.8V602" stroke="#2a2a66" stroke-width="1" fill="none"/>
<path d="M322.5 110V125" stroke="#ffffff" stroke-width="1" fill="none"/>
<path d="M748.5 110V180M748.5 192V223M748.5 229V352M748.5 395V493M748.5 505V526M748.5 541V602" stroke="#ffffff" stroke-width="1" fill="none"/>
<path d="M804.5 158V210M804.5 216V305M804.5 327V395M804.5 400V452M804.5 472V506M804.5 512V565" stroke="#ffffff" stroke-width="1" fill="none"/>
<path d="M866.5 202V282.5M866.5 296V320M866.5 331V432M866.5 443.6V470M866.5 480.7V582M866.5 593V602" stroke="#ffffff" stroke-width="1" fill="none"/>
<path d="M912.5 184V248M912.5 259V285M912.5 296V396M912.5 407V433.5M912.5 446V545.5M912.5 557V583M912.5 595V602" stroke="#ffffff" stroke-width="1" fill="none"/>
<path d="M378.5 424V480M378.5 488.7V565" stroke="#ffffff" stroke-width="1" fill="none"/>
<path d="M433.5 424V431.7M433.5 445V469.7M433.5 481V581M433.5 593V602" stroke="#ffffff" stroke-width="1" fill="none"/>
<path d="M486.5 424V433M486.5 445.7V545.7M486.5 556.8V582.3M486.5 594V602" stroke="#ffffff" stroke-width="1" fill="none"/>
<path d="M584.5 424V430M584.5 443V543M584.5 555V580M584.5 592.5V602" stroke="#ffffff" stroke-width="1" fill="none"/>
<path d="M684.5 424V431.7M684.5 445V469.7M684.5 481V581M684.5 593V602" stroke="#ffffff" stroke-width="1" fill="none"/>
<path d="M692.5 424V452.7M692.5 472V507M692.5 512V564" stroke="#ffffff" stroke-width="1" fill="none"/>
<path d="M778 183.5H831" stroke="#ffffff" stroke-width="1" fill="none"/>
<path d="M778 224.5H831" stroke="#ffffff" stroke-width="1" fill="none"/>
<path d="M866 202.5H968" stroke="#ffffff" stroke-width="1" fill="none"/>
<path d="M723 239.5H813" stroke="#ffffff" stroke-width="1" fill="none"/>
<path d="M723 280.5H778" stroke="#ffffff" stroke-width="1" fill="none"/>
<path d="M778 295.5H831" stroke="#ffffff" stroke-width="1" fill="none"/>
<path d="M778 336.5H831" stroke="#ffffff" stroke-width="1" fill="none"/>
<path d="M852 313.5H972" stroke="#ffffff" stroke-width="1" fill="none"/>
<path d="M778 386.5H831" stroke="#ffffff" stroke-width="1" fill="none"/>
<path d="M778 426.5H831M666 426.5H719M367 426.5H405" stroke="#ffffff" stroke-width="1" fill="none"/>
<path d="M718 441.5H787.6" stroke="#ffffff" stroke-width="1" fill="none"/>
<path d="M684.5 482.5H813M367 482.5H385.5" stroke="#ffffff" stroke-width="1" fill="none"/>
<path d="M778 497.5H831M665.7 497.5H719" stroke="#ffffff" stroke-width="1" fill="none"/>
<path d="M778 538.5H831M665.7 538.5H719M367 538.5H405" stroke="#ffffff" stroke-width="1" fill="none"/>
<path d="M723 363H761.5M772 363H873.4M884.5 363H910.6M921 363H972" stroke="#ffffff" stroke-width="2" fill="none"/>
<text x="355.6" y="133.6" font-family="Liberation Sans" font-weight="bold" font-size="11.5" fill="#0000ff">121.5</text>
<text x="717" y="563" font-family="Liberation Sans" font-weight="bold" font-size="12" fill="#0000ff">41.5</text>
<text x="763" y="563" font-family="Liberation Sans" font-weight="bold" font-size="12" fill="#0000ff">41.5</text>
<text x="0" y="0" transform="translate(734.5 382.2) rotate(-90) scale(0.86 1)" text-anchor="middle" font-family="Liberation Sans" font-weight="bold" font-size="13.5" fill="#0000ff">120</text>
<text x="0" y="0" transform="translate(785 263.5) rotate(-90) scale(0.86 1)" text-anchor="middle" font-family="Liberation Sans" font-weight="bold" font-size="13.5" fill="#0000ff">30</text>
<text x="0" y="0" transform="translate(841.5 318.6) rotate(-90) scale(0.86 1)" text-anchor="middle" font-family="Liberation Sans" font-weight="bold" font-size="13.5" fill="#0000ff">30</text>
<text x="0" y="0" transform="translate(841.5 384.4) rotate(-90) scale(0.86 1)" text-anchor="middle" font-family="Liberation Sans" font-weight="bold" font-size="13.5" fill="#0000ff">18.5</text>
<text x="0" y="0" transform="translate(857.8 410.8) rotate(-90) scale(0.86 1)" text-anchor="middle" font-family="Liberation Sans" font-weight="bold" font-size="13.5" fill="#0000ff">166</text>
<text x="0" y="0" transform="translate(843.5 461.5) rotate(-90) scale(0.86 1)" text-anchor="middle" font-family="Liberation Sans" font-weight="bold" font-size="13.5" fill="#0000ff">53</text>
<text x="0" y="0" transform="translate(401.2 580.1) rotate(-90) scale(0.86 1)" text-anchor="middle" font-family="Liberation Sans" font-weight="bold" font-size="13.5" fill="#0000ff">127</text>
<text x="0" y="0" transform="translate(976 342) rotate(-90) scale(0.86 1)" text-anchor="middle" font-family="Liberation Sans" font-weight="bold" font-size="13.5" fill="#0000ff">25</text>
<text x="0" y="0" transform="translate(976 383.5) rotate(-90) scale(0.86 1)" text-anchor="middle" font-family="Liberation Sans" font-weight="bold" font-size="13.5" fill="#0000ff">25</text>
<path d="M879.2 352.8V346.5M879.2 348.5Q879.5 346.5 881.5 346.5Q883.7 346.5 883.7 348.5V352.8" stroke="#0000ff" stroke-width="1.8" fill="none"/>
</svg>
<!-- dialog -->
<div class="a" style="left:110px;top:135px;width:613px;height:290px;background:#f0f0f0;border:1px solid #7a7a7a;box-shadow:1px 2px 6px rgba(0,0,0,0.35)"></div>
<div class="a" style="left:111px;top:136px;width:611px;height:29px;background:#fff"></div>
<div class="t" style="left:140px;top:144px">Paste Block</div>
<div class="t" style="left:126px;top:176px">Name</div>
<svg class="a" style="left:110px;top:135px" width="613" height="289" viewBox="110 135 613 289">
<rect x="125" y="143" width="8" height="7" fill="#444"/><rect x="121" y="147" width="4" height="4" fill="#555"/><rect x="126" y="151" width="6" height="3" fill="#555"/>
<path d="M604 149.5h10" stroke="#000" stroke-width="1"/><rect x="649.5" y="144.5" width="9" height="9" fill="none" stroke="#000"/><path d="M694.5 144l10.5 10.5M705 144l-10.5 10.5" stroke="#000" stroke-width="1"/>
<path d="M130 231.5H123.5V381.5H534.5V231.5H370" fill="none" stroke="#dcdcdc"/>
<rect x="163.5" y="239.5" width="40" height="22" fill="#fff" stroke="#7a7a7a"/>
<rect x="163.5" y="275.5" width="40" height="22" fill="#fff" stroke="#7a7a7a"/>
<rect x="163.5" y="313.5" width="40" height="22" fill="#fff" stroke="#7a7a7a"/>
<rect x="402.5" y="239.5" width="99" height="22" fill="#fff" stroke="#7a7a7a"/>
<rect x="402.5" y="275.5" width="99" height="22" fill="#fff" stroke="#7a7a7a"/>
<rect x="402.5" y="313.5" width="99" height="22" fill="#fff" stroke="#7a7a7a"/>
<rect x="402.5" y="349.5" width="99" height="22" fill="#fff" stroke="#7a7a7a"/>
<rect x="137.5" y="349.5" width="60" height="20" fill="#e1e1e1" stroke="#adadad"/>
<rect x="555" y="223" width="156" height="160" fill="#fff"/>
<path d="M555 223.8h13" stroke="#a8a8a8" stroke-width="0.9" stroke-dasharray="1.5 0.5 3 0.6 2 0.5"/><path d="M555 227.7h13" stroke="#a8a8a8" stroke-width="0.9" stroke-dasharray="1.5 0.5 3 0.6 2 0.5"/><path d="M555 231.1h13" stroke="#a8a8a8" stroke-width="0.9" stroke-dasharray="1.5 0.5 3 0.6 2 0.5"/><path d="M555 234.2h13" stroke="#a8a8a8" stroke-width="0.9" stroke-dasharray="1.5 0.5 3 0.6 2 0.5"/><path d="M555 237h13" stroke="#a8a8a8" stroke-width="0.9" stroke-dasharray="1.5 0.5 3 0.6 2 0.5"/><path d="M555 240.8h13" stroke="#a8a8a8" stroke-width="0.9" stroke-dasharray="1.5 0.5 3 0.6 2 0.5"/><path d="M555 244.2h13" stroke="#a8a8a8" stroke-width="0.9" stroke-dasharray="1.5 0.5 3 0.6 2 0.5"/><path d="M555 247.2h13" stroke="#a8a8a8" stroke-width="0.9" stroke-dasharray="1.5 0.5 3 0.6 2 0.5"/><path d="M587 223.8h13" stroke="#a8a8a8" stroke-width="0.9" stroke-dasharray="1.5 0.5 3 0.6 2 0.5"/><path d="M587 227.7h13" stroke="#a8a8a8" stroke-width="0.9" stroke-dasharray="1.5 0.5 3 0.6 2 0.5"/><path d="M587 231.1h13" stroke="#a8a8a8" stroke-width="0.9" stroke-dasharray="1.5 0.5 3 0.6 2 0.5"/><path d="M587 234.2h13" stroke="#a8a8a8" stroke-width="0.9" stroke-dasharray="1.5 0.5 3 0.6 2 0.5"/><path d="M587 237h13" stroke="#a8a8a8" stroke-width="0.9" stroke-dasharray="1.5 0.5 3 0.6 2 0.5"/><path d="M587 240.8h13" stroke="#a8a8a8" stroke-width="0.9" stroke-dasharray="1.5 0.5 3 0.6 2 0.5"/><path d="M587 244.2h13" stroke="#a8a8a8" stroke-width="0.9" stroke-dasharray="1.5 0.5 3 0.6 2 0.5"/><path d="M587 247.2h13" stroke="#a8a8a8" stroke-width="0.9" stroke-dasharray="1.5 0.5 3 0.6 2 0.5"/><path d="M618 223.8h13" stroke="#a8a8a8" stroke-width="0.9" stroke-dasharray="1.5 0.5 3 0.6 2 0.5"/><path d="M618 227.7h13" stroke="#a8a8a8" stroke-width="0.9" stroke-dasharray="1.5 0.5 3 0.6 2 0.5"/><path d="M618 231.1h13" stroke="#a8a8a8" stroke-width="0.9" stroke-dasharray="1.5 0.5 3 0.6 2 0.5"/><path d="M618 234.2h13" stroke="#a8a8a8" stroke-width="0.9" stroke-dasharray="1.5 0.5 3 0.6 2 0.5"/><path d="M618 237h13" stroke="#a8a8a8" stroke-width="0.9" stroke-dasharray="1.5 0.5 3 0.6 2 0.5"/><path d="M618 240.8h13" stroke="#a8a8a8" stroke-width="0.9" stroke-dasharray="1.5 0.5 3 0.6 2 0.5"/><path d="M618 244.2h13" stroke="#a8a8a8" stroke-width="0.9" stroke-dasharray="1.5 0.5 3 0.6 2 0.5"/><path d="M618 247.2h13" stroke="#a8a8a8" stroke-width="0.9" stroke-dasharray="1.5 0.5 3 0.6 2 0.5"/><path d="M649 223.8h13" stroke="#a8a8a8" stroke-width="0.9" stroke-dasharray="1.5 0.5 3 0.6 2 0.5"/><path d="M649 227.7h13" stroke="#a8a8a8" stroke-width="0.9" stroke-dasharray="1.5 0.5 3 0.6 2 0.5"/><path d="M649 231.1h13" stroke="#a8a8a8" stroke-width="0.9" stroke-dasharray="1.5 0.5 3 0.6 2 0.5"/><path d="M649 234.2h13" stroke="#a8a8a8" stroke-width="0.9" stroke-dasharray="1.5 0.5 3 0.6 2 0.5"/><path d="M649 237h13" stroke="#a8a8a8" stroke-width="0.9" stroke-dasharray="1.5 0.5 3 0.6 2 0.5"/><path d="M649 240.8h13" stroke="#a8a8a8" stroke-width="0.9" stroke-dasharray="1.5 0.5 3 0.6 2 0.5"/><path d="M649 244.2h13" stroke="#a8a8a8" stroke-width="0.9" stroke-dasharray="1.5 0.5 3 0.6 2 0.5"/><path d="M649 247.2h13" stroke="#a8a8a8" stroke-width="0.9" stroke-dasharray="1.5 0.5 3 0.6 2 0.5"/><path d="M680 223.8h13" stroke="#a8a8a8" stroke-width="0.9" stroke-dasharray="1.5 0.5 3 0.6 2 0.5"/><path d="M680 227.7h13" stroke="#a8a8a8" stroke-width="0.9" stroke-dasharray="1.5 0.5 3 0.6 2 0.5"/><path d="M680 231.1h13" stroke="#a8a8a8" stroke-width="0.9" stroke-dasharray="1.5 0.5 3 0.6 2 0.5"/><path d="M680 234.2h13" stroke="#a8a8a8" stroke-width="0.9" stroke-dasharray="1.5 0.5 3 0.6 2 0.5"/><path d="M680 237h13" stroke="#a8a8a8" stroke-width="0.9" stroke-dasharray="1.5 0.5 3 0.6 2 0.5"/><path d="M680 240.8h13" stroke="#a8a8a8" stroke-width="0.9" stroke-dasharray="1.5 0.5 3 0.6 2 0.5"/><path d="M680 244.2h13" stroke="#a8a8a8" stroke-width="0.9" stroke-dasharray="1.5 0.5 3 0.6 2 0.5"/><path d="M680 247.2h13" stroke="#a8a8a8" stroke-width="0.9" stroke-dasharray="1.5 0.5 3 0.6 2 0.5"/>
<path d="M571 236.5h126" stroke="#000" stroke-width="1.3"/><path d="M633 226L697 236.5L633 248z" fill="#000"/>
<rect x="556.5" y="391.5" width="72" height="20" fill="#e1e1e1" stroke="#adadad"/><rect x="637.5" y="391.5" width="72" height="20" fill="#e1e1e1" stroke="#adadad"/>
<rect x="720" y="414" width="2" height="2" fill="#b4b4b4"/>
<rect x="717" y="417" width="2" height="2" fill="#b4b4b4"/>
<rect x="720" y="417" width="2" height="2" fill="#b4b4b4"/>
<rect x="714" y="420" width="2" height="2" fill="#b4b4b4"/>
<rect x="717" y="420" width="2" height="2" fill="#b4b4b4"/>
<rect x="720" y="420" width="2" height="2" fill="#b4b4b4"/>
</svg>
<div class="t" style="left:132px;top:225px">Position</div>
<div class="t" style="left:139px;top:244px">X</div>
<div class="t" style="left:139px;top:280px">Y</div>
<div class="t" style="left:139px;top:318px">Z</div>
<div class="t" style="left:166px;top:245px">0</div>
<div class="t" style="left:166px;top:281px">0</div>
<div class="t" style="left:166px;top:319px">0</div>
<div class="t" style="left:147px;top:354px">Select...</div>
<div class="t" style="left:342px;top:225px">Scale</div>
<div class="t" style="left:405px;top:244px">100</div>
<div class="t" style="left:512px;top:244px">%</div>
<div class="t" style="left:405px;top:280px">100</div>
<div class="t" style="left:512px;top:280px">%</div>
<div class="t" style="left:405px;top:318px">100</div>
<div class="t" style="left:512px;top:318px">%</div>
<div class="t" style="left:405px;top:354px">0</div>
<div class="t" style="left:358px;top:354px">Angle</div>
<div class="t" style="left:584px;top:396px">Ok</div>
<div class="t" style="left:655px;top:396px">Cancel</div>
<!-- combo -->
<div class="a" style="left:178px;top:171px;width:189px;height:23px;background:#fff;border:1px solid #0078d7"></div>
<div class="a" style="left:350px;top:172px;width:16px;height:21px;background:#cce4f7;border-left:1px solid #0058a8"></div>
<svg class="a" style="left:350px;top:172px" width="16" height="21"><path d="M3.5 8.5l4.5 4.5l4.5-4.5" fill="none" stroke="#333" stroke-width="1.1"/></svg>
<div class="a" style="left:181px;top:174px;width:84px;height:16px;background:#0078d7"></div>
<div class="t" style="left:181px;top:175.5px;color:#fff;transform-origin:0 0;transform:scaleX(0.85)">_CLOSEDFILLED</div>
<!-- dropdown -->
<div class="a" style="left:178px;top:193px;width:189px;height:2px;background:#0066c0;z-index:2"></div>
<div class="a" style="left:178px;top:193px;width:189px;height:450px;background:#fff;border:1px solid #0078d7;box-shadow:2px 2px 2px rgba(0,0,0,0.35)"></div>
<div class="a" style="left:179px;top:375px;width:170px;height:15px;background:#0078d7"></div>
<div class="t" style="left:181px;top:196.5px;color:#000;transform-origin:0 0;transform:scaleX(0.85)">_CLOSEDFILLED</div>
<div class="t" style="left:181px;top:211.5px;color:#000;transform-origin:0 0;transform:scaleX(0.98)">2dCenterMark1</div>
<div class="t" style="left:181px;top:226.5px;color:#000;transform-origin:0 0;transform:scaleX(0.98)">2dCenterMark10</div>
<div class="t" style="left:181px;top:241.5px;color:#000;transform-origin:0 0;transform:scaleX(0.98)">2dCenterMark11</div>
<div class="t" style="left:181px;top:256.5px;color:#000;transform-origin:0 0;transform:scaleX(0.98)">2dCenterMark12</div>
<div class="t" style="left:181px;top:271.5px;color:#000;transform-origin:0 0;transform:scaleX(0.98)">2dCenterMark13</div>
<div class="t" style="left:181px;top:286.5px;color:#000;transform-origin:0 0;transform:scaleX(0.98)">2dCenterMark14</div>
<div class="t" style="left:181px;top:301.5px;color:#000;transform-origin:0 0;transform:scaleX(0.98)">2dCenterMark15</div>
<div class="t" style="left:181px;top:316.5px;color:#000;transform-origin:0 0;transform:scaleX(0.98)">2dCenterMark16</div>
<div class="t" style="left:181px;top:331.5px;color:#000;transform-origin:0 0;transform:scaleX(0.98)">2dCenterMark17</div>
<div class="t" style="left:181px;top:346.5px;color:#000;transform-origin:0 0;transform:scaleX(0.98)">2dCenterMark18</div>
<div class="t" style="left:181px;top:361.5px;color:#000;transform-origin:0 0;transform:scaleX(0.98)">2dCenterMark19</div>
<div class="t" style="left:181px;top:376.5px;color:#fff;transform-origin:0 0;transform:scaleX(0.98)">2dCenterMark2</div>
<div class="t" style="left:181px;top:391.5px;color:#000;transform-origin:0 0;transform:scaleX(0.98)">2dCenterMark20</div>
<div class="t" style="left:181px;top:406.5px;color:#000;transform-origin:0 0;transform:scaleX(0.98)">2dCenterMark21</div>
<div class="t" style="left:181px;top:421.5px;color:#000;transform-origin:0 0;transform:scaleX(0.98)">2dCenterMark22</div>
<div class="t" style="left:181px;top:436.5px;color:#000;transform-origin:0 0;transform:scaleX(0.98)">2dCenterMark23</div>
<div class="t" style="left:181px;top:451.5px;color:#000;transform-origin:0 0;transform:scaleX(0.98)">2dCenterMark24</div>
<div class="t" style="left:181px;top:466.5px;color:#000;transform-origin:0 0;transform:scaleX(0.98)">2dCenterMark25</div>
<div class="t" style="left:181px;top:481.5px;color:#000;transform-origin:0 0;transform:scaleX(0.98)">2dCenterMark26</div>
<div class="t" style="left:181px;top:496.5px;color:#000;transform-origin:0 0;transform:scaleX(0.98)">2dCenterMark27</div>
<div class="t" style="left:181px;top:511.5px;color:#000;transform-origin:0 0;transform:scaleX(0.98)">2dCenterMark28</div>
<div class="t" style="left:181px;top:526.5px;color:#000;transform-origin:0 0;transform:scaleX(0.98)">2dCenterMark29</div>
<div class="t" style="left:181px;top:541.5px;color:#000;transform-origin:0 0;transform:scaleX(0.98)">2dCenterMark3</div>
<div class="t" style="left:181px;top:556.5px;color:#000;transform-origin:0 0;transform:scaleX(0.98)">2dCenterMark30</div>
<div class="t" style="left:181px;top:571.5px;color:#000;transform-origin:0 0;transform:scaleX(0.98)">2dCenterMark31</div>
<div class="t" style="left:181px;top:586.5px;color:#000;transform-origin:0 0;transform:scaleX(0.98)">2dCenterMark32</div>
<div class="t" style="left:181px;top:601.5px;color:#000;transform-origin:0 0;transform:scaleX(0.98)">2dCenterMark33</div>
<div class="t" style="left:181px;top:616.5px;color:#000;transform-origin:0 0;transform:scaleX(0.98)">2dCenterMark34</div>
<div class="t" style="left:181px;top:631.5px;color:#000;transform-origin:0 0;transform:scaleX(0.98)">2dCenterMark35</div>
<div class="a" style="left:350px;top:194px;width:16px;height:442px;background:#f0f0f0"></div>
<div class="a" style="left:351px;top:212px;width:14px;height:73px;background:#cdcdcd"></div>
<svg class="a" style="left:350px;top:194px" width="16" height="18"><path d="M4.5 11l3.5-3.5l3.5 3.5" fill="none" stroke="#606060" stroke-width="1.6"/></svg>
<svg class="a" style="left:350px;top:626px" width="16" height="10"><path d="M4.5 7l3.5 3.5l3.5-3.5" fill="none" stroke="#606060" stroke-width="1.6"/></svg>
</body></html>
